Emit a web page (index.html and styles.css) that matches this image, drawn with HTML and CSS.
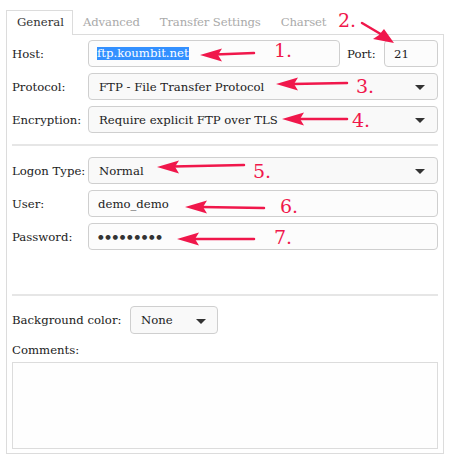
FILE: index.html
```html
<!DOCTYPE html>
<html>
<head>
<meta charset="utf-8">
<link rel="stylesheet" href="styles.css">
</head>
<body>
<div class="page">
  <div class="tabs">
    <div class="tab active">General</div>
    <div class="tab">Advanced</div>
    <div class="tab">Transfer Settings</div>
    <div class="tab">Charset</div>
  </div>
  <div class="panel">
    <div class="group">
      <div class="row">
        <label class="lbl">Host:</label>
        <div class="field host"><span class="sel">ftp.koumbit.net</span></div>
        <label class="lbl port-lbl">Port:</label>
        <div class="field port">21</div>
      </div>
      <div class="row">
        <label class="lbl">Protocol:</label>
        <div class="field select grow">FTP - File Transfer Protocol<span class="caret"></span></div>
      </div>
      <div class="row">
        <label class="lbl">Encryption:</label>
        <div class="field select grow">Require explicit FTP over TLS<span class="caret"></span></div>
      </div>
    </div>
    <hr class="sep">
    <div class="group">
      <div class="row">
        <label class="lbl">Logon Type:</label>
        <div class="field select grow">Normal<span class="caret"></span></div>
      </div>
      <div class="row">
        <label class="lbl">User:</label>
        <div class="field grow">demo_demo</div>
      </div>
      <div class="row">
        <label class="lbl">Password:</label>
        <div class="field grow pw">●●●●●●●●●</div>
      </div>
    </div>
    <hr class="sep sep2">
    <div class="row bg-row">
      <label class="lbl bg-lbl">Background color:</label>
      <div class="field select small">None<span class="caret"></span></div>
    </div>
    <div class="comments-lbl">Comments:</div>
    <div class="textarea"></div>
  </div>

  <svg class="notes" width="454" height="465" viewBox="0 0 454 465">
    <g stroke="#f0174b" stroke-width="2.5" fill="none" stroke-linecap="round">
      <line x1="254" y1="53" x2="215" y2="54.5"/>
      <line x1="362" y1="23" x2="384" y2="36"/>
      <line x1="347" y1="83" x2="292" y2="84"/>
      <line x1="347" y1="119" x2="298" y2="119"/>
      <line x1="244" y1="165" x2="173" y2="166.5"/>
      <line x1="264" y1="208" x2="201" y2="207"/>
      <line x1="254" y1="239" x2="193" y2="239"/>
    </g>
    <g fill="#f0174b">
      <polygon points="200,55 222,48.5 218,55 222,61.5"/>
      <polygon points="394,43 373,39 379,35 384,29"/>
      <polygon points="276,84 298,77.5 294,84 298,90.5"/>
      <polygon points="282,119 304,112.5 300,119 304,125.5"/>
      <polygon points="157,167 179,160.5 175,166.8 179,173.5"/>
      <polygon points="185,207 207,200.5 203,207 207,213.5"/>
      <polygon points="177,239 199,232.5 195,239 199,245.5"/>
    </g>
    <g class="num" fill="#f0174b">
      <text x="274" y="57">1.</text>
      <text x="338" y="27">2.</text>
      <text x="356" y="93">3.</text>
      <text x="352" y="127">4.</text>
      <text x="253" y="178">5.</text>
      <text x="280" y="213">6.</text>
      <text x="274" y="244">7.</text>
    </g>
  </svg>
</div>
</body>
</html>
```

FILE: styles.css
```css
html, body {
  margin: 0;
  padding: 0;
  background: #ffffff;
}

.page {
  position: relative;
  width: 454px;
  height: 465px;
  padding: 10px 0 0 6px;
  box-sizing: border-box;
  font-family: "DejaVu Serif", serif;
  font-size: 11.7px;
  color: #222;
}

.tabs {
  display: flex;
  height: 24px;
}

.tab {
  padding: 0 10px 0 10px;
  line-height: 22px;
  color: #aaa;
  letter-spacing: -0.15px;
  border: 1px solid transparent;
  border-bottom: none;
}

.tab + .tab {
  padding: 0 9px 0 9px;
}

.tab.active {
  color: #333;
  background: #fff;
  border-color: #dcdcdc;
  width: 45px;
  position: relative;
  z-index: 1;
  height: 24px;
  letter-spacing: 0;
}

.panel {
  width: 438px;
  height: 420px;
  box-sizing: border-box;
  border: 1px solid #dcdcdc;
  padding: 5px 5px 0 5px;
}

.group {
  display: flex;
  flex-direction: column;
  gap: 6px;
}

.row {
  display: flex;
  align-items: center;
  height: 27px;
}

.lbl {
  width: 76px;
  flex: none;
  color: #222;
}

.field {
  height: 27px;
  box-sizing: border-box;
  border: 1px solid #cfcfcf;
  border-radius: 4px;
  background: #fcfcfc;
  padding: 0 9px;
  display: flex;
  align-items: center;
  color: #222;
  position: relative;
}

.host {
  width: 252px;
  padding-left: 8px;
}

.sel {
  background: #3390ff;
  color: #fff;
  line-height: 13px;
}

.port-lbl {
  width: auto;
  margin-left: 7px;
}

.port {
  width: 54px;
  margin-left: auto;
  padding-left: 9px;
}

.grow {
  flex: 1;
}

.select {
  background: #f9f9f9;
  padding-left: 10px;
}

.caret {
  position: absolute;
  right: 12px;
  top: 11px;
  width: 0;
  height: 0;
  border-left: 5px solid transparent;
  border-right: 5px solid transparent;
  border-top: 5px solid #333;
}

.pw {
  letter-spacing: 1.7px;
  font-family: "DejaVu Sans", sans-serif;
  font-size: 6.4px;
  color: #333;
}

.sep {
  border: none;
  height: 2px;
  background: #e6e6e6;
  margin: 11px 0 11px 0;
}

.sep2 {
  margin: 44px 0 10px 0;
}

.bg-row {
  height: 28px;
}

.bg-lbl {
  width: 118px;
}

.small {
  width: 88px;
  height: 28px;
}

.small .caret {
  right: 11px;
  top: 12px;
}

.comments-lbl {
  margin-top: 9px;
  height: 19px;
  line-height: 14px;
}

.textarea {
  height: 87px;
  border: 1px solid #dcdcdc;
  box-sizing: border-box;
  background: #fefefe;
}

.notes {
  position: absolute;
  left: 0;
  top: 0;
  pointer-events: none;
}

.num text {
  font-family: "DejaVu Serif", serif;
  font-size: 19px;
}
```
